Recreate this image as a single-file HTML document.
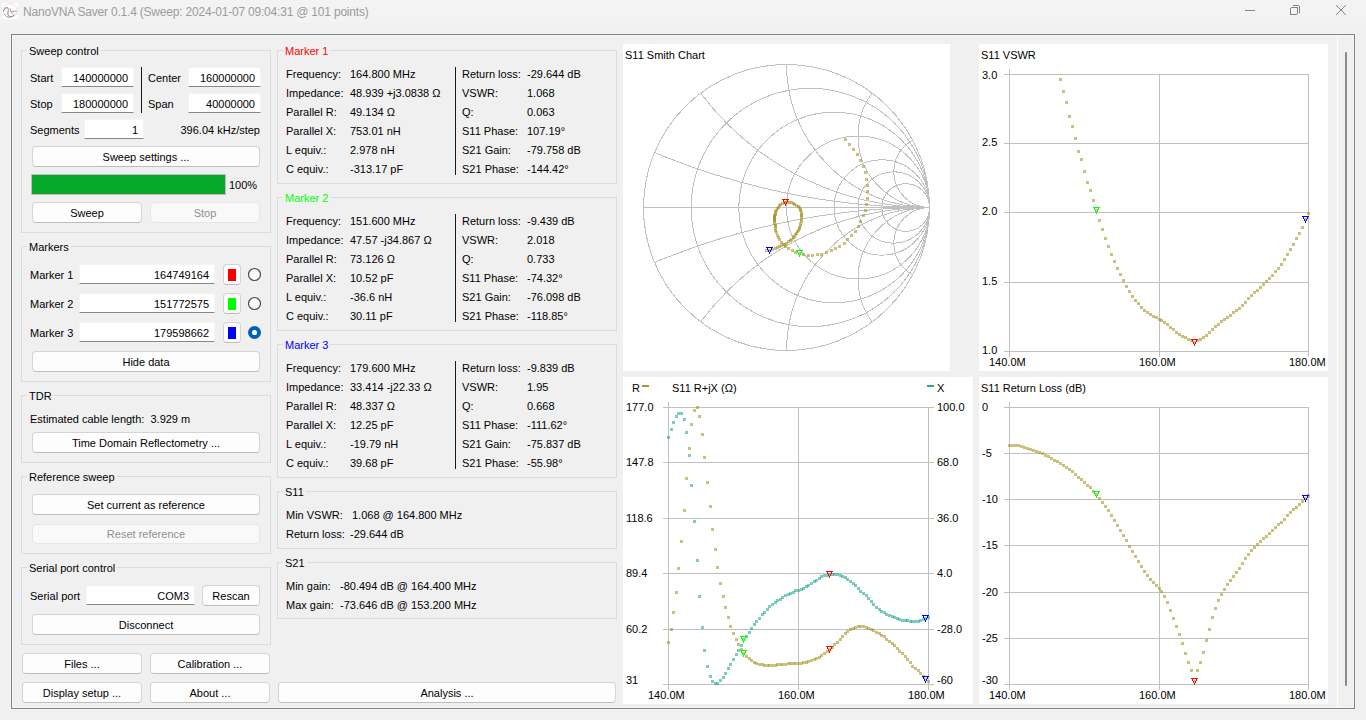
<!DOCTYPE html><html><head><meta charset="utf-8"><style>
*{margin:0;padding:0}
html,body{width:1366px;height:720px;overflow:hidden;background:#f0f0f0;font-family:"Liberation Sans",sans-serif;font-size:11px;color:#000}
.t{position:absolute;white-space:pre;line-height:13px}
.btn{position:absolute;box-sizing:border-box;border-radius:4px}
.btn span{position:absolute;left:0;right:0;text-align:center;white-space:pre;line-height:13px}
.le{position:absolute;box-sizing:border-box;background:#fff;border:1px solid #f4f4f4;border-bottom:1px solid #868686;border-radius:2px 2px 0 0}
.le span{position:absolute;white-space:pre;line-height:13px}
svg{position:absolute}
</style></head><body><div style="position:absolute;left:0px;top:0px;width:1366px;height:30px;background:#f3f3f3;"></div>
<svg style="left:2px;top:3px" width="16" height="16" viewBox="0 0 16 16"><rect width="16" height="16" fill="#ffffff"/><circle cx="8.3" cy="7.6" r="6.8" fill="none" stroke="#c4c4c8" stroke-width="0.9" stroke-dasharray="1.2 0.8"/><path d="M1.3 8.5 Q2.5 4 5.5 4.5 Q7 6 6 9 Q5 12 7.5 13.5 Q10.5 14 12.5 12" fill="none" stroke="#8a82b0" stroke-width="1"/><path d="M2 11 Q4 14.5 8 14.5" fill="none" stroke="#9a94b8" stroke-width="0.9"/><path d="M8.2 5 L8.6 8 L10.8 11.5" fill="none" stroke="#e8906a" stroke-width="0.9"/><path d="M9 8.5 L14.8 8.2" stroke="#8c8c98" stroke-width="0.8"/></svg>
<div class="t" style="top:6px;left:23px;color:#9b9b9b;font-size:12px;letter-spacing:-0.2px;">NanoVNA Saver 0.1.4 (Sweep: 2024-01-07 09:04:31 @ 101 points)</div>
<svg style="left:1230px;top:0px" width="136" height="22"><g stroke="#858585" stroke-width="1" fill="none" shape-rendering="crispEdges"><line x1="15" y1="10.5" x2="25" y2="10.5"/><rect x="60.5" y="7.5" width="7" height="7" rx="1.5"/><path d="M62.5 5.5 h5 a2 2 0 0 1 2 2 v5"/></g><g stroke="#858585" stroke-width="1" fill="none"><path d="M106 5 L116 15 M116 5 L106 15"/></g></svg>
<div style="position:absolute;left:0px;top:23px;width:1366px;height:697px;background:#f0f0f0;"></div>
<div style="position:absolute;left:11px;top:34px;width:1344px;height:675px;box-sizing:border-box;border:1px solid #7d818a;"></div>
<div style="position:absolute;left:10px;top:33px;width:1346px;height:677px;box-sizing:border-box;border:1px solid #f6f6f6;"></div>
<div style="position:absolute;left:12px;top:35px;width:1342px;height:673px;box-sizing:border-box;border:1px solid #f7f7f7;"></div>
<div style="position:absolute;left:21px;top:50px;width:250px;height:183px;box-sizing:border-box;border:1px solid #dcdcdc;"></div>
<div class="t" style="top:45px;left:29px;background:#f0f0f0;padding:0 2px;margin-left:-2px;">Sweep control</div>
<div class="t" style="top:72px;left:30px;">Start</div>
<div class="le" style="left:61px;top:67px;width:73px;height:20px;"><span style="right:5px;top:4px">140000000</span></div>
<div class="t" style="top:98px;left:30px;">Stop</div>
<div class="le" style="left:61px;top:93px;width:73px;height:20px;"><span style="right:5px;top:4px">180000000</span></div>
<div style="position:absolute;left:141px;top:67px;width:1px;height:46px;background:#1a1a1a;"></div>
<div class="t" style="top:72px;left:148px;">Center</div>
<div class="le" style="left:188px;top:67px;width:73px;height:20px;"><span style="right:5px;top:4px">160000000</span></div>
<div class="t" style="top:98px;left:148px;">Span</div>
<div class="le" style="left:188px;top:93px;width:73px;height:20px;"><span style="right:5px;top:4px">40000000</span></div>
<div class="t" style="top:124px;left:30px;">Segments</div>
<div class="le" style="left:84px;top:119px;width:60px;height:20px;"><span style="right:5px;top:4px">1</span></div>
<div class="t" style="top:124px;right:1106px;">396.04 kHz/step</div>
<div class="btn" style="left:32px;top:146px;width:228px;height:21px;background:#fdfdfd;border:1px solid #d4d4d4;border-bottom-color:#bdbdbd;color:#000;"><span style="top:4px">Sweep settings ...</span></div>
<div style="position:absolute;left:32px;top:175px;width:193px;height:19px;background:#06a829;box-shadow:0 0 0 1px #c4bcc4;"></div>
<div class="t" style="top:179px;left:229px;">100%</div>
<div class="btn" style="left:32px;top:202px;width:110px;height:21px;background:#fdfdfd;border:1px solid #d4d4d4;border-bottom-color:#bdbdbd;color:#000;"><span style="top:4px">Sweep</span></div>
<div class="btn" style="left:150px;top:202px;width:110px;height:21px;background:#f9f9f9;border:1px solid #e6e6e6;color:#8f8f8f;"><span style="top:4px">Stop</span></div>
<div style="position:absolute;left:21px;top:246px;width:250px;height:136px;box-sizing:border-box;border:1px solid #dcdcdc;"></div>
<div class="t" style="top:241px;left:29px;background:#f0f0f0;padding:0 2px;margin-left:-2px;">Markers</div>
<div class="t" style="top:269px;left:30px;">Marker 1</div>
<div class="le" style="left:79px;top:264px;width:136px;height:20px;"><span style="right:5px;top:4px">164749164</span></div>
<div style="position:absolute;left:223px;top:264px;width:18px;height:21px;box-sizing:border-box;background:#fdfdfd;border:1px solid #d4d4d4;border-bottom-color:#bdbdbd;border-radius:4px;"></div>
<div style="position:absolute;left:228px;top:269px;width:8px;height:12px;background:#ff0000;"></div>
<svg style="left:247px;top:267px" width="15" height="15"><circle cx="7.5" cy="7.5" r="6" fill="#f8f8f8" stroke="#4a4a4a" stroke-width="1.2"/></svg>
<div class="t" style="top:298px;left:30px;">Marker 2</div>
<div class="le" style="left:79px;top:293px;width:136px;height:20px;"><span style="right:5px;top:4px">151772575</span></div>
<div style="position:absolute;left:223px;top:293px;width:18px;height:21px;box-sizing:border-box;background:#fdfdfd;border:1px solid #d4d4d4;border-bottom-color:#bdbdbd;border-radius:4px;"></div>
<div style="position:absolute;left:228px;top:298px;width:8px;height:12px;background:#00ff00;"></div>
<svg style="left:247px;top:296px" width="15" height="15"><circle cx="7.5" cy="7.5" r="6" fill="#f8f8f8" stroke="#4a4a4a" stroke-width="1.2"/></svg>
<div class="t" style="top:327px;left:30px;">Marker 3</div>
<div class="le" style="left:79px;top:322px;width:136px;height:20px;"><span style="right:5px;top:4px">179598662</span></div>
<div style="position:absolute;left:223px;top:322px;width:18px;height:21px;box-sizing:border-box;background:#fdfdfd;border:1px solid #d4d4d4;border-bottom-color:#bdbdbd;border-radius:4px;"></div>
<div style="position:absolute;left:228px;top:327px;width:8px;height:12px;background:#0000ff;"></div>
<svg style="left:247px;top:325px" width="15" height="15"><circle cx="7.5" cy="7.5" r="6.5" fill="#005fb8"/><circle cx="7.5" cy="7.5" r="2.6" fill="#fff"/></svg>
<div class="btn" style="left:32px;top:351px;width:228px;height:21px;background:#fdfdfd;border:1px solid #d4d4d4;border-bottom-color:#bdbdbd;color:#000;"><span style="top:4px">Hide data</span></div>
<div style="position:absolute;left:21px;top:395px;width:250px;height:68px;box-sizing:border-box;border:1px solid #dcdcdc;"></div>
<div class="t" style="top:390px;left:29px;background:#f0f0f0;padding:0 2px;margin-left:-2px;">TDR</div>
<div class="t" style="top:413px;left:30px;">Estimated cable length:  3.929 m</div>
<div class="btn" style="left:32px;top:432px;width:228px;height:21px;background:#fdfdfd;border:1px solid #d4d4d4;border-bottom-color:#bdbdbd;color:#000;"><span style="top:4px">Time Domain Reflectometry ...</span></div>
<div style="position:absolute;left:21px;top:476px;width:250px;height:78px;box-sizing:border-box;border:1px solid #dcdcdc;"></div>
<div class="t" style="top:471px;left:29px;background:#f0f0f0;padding:0 2px;margin-left:-2px;">Reference sweep</div>
<div class="btn" style="left:32px;top:494px;width:228px;height:21px;background:#fdfdfd;border:1px solid #d4d4d4;border-bottom-color:#bdbdbd;color:#000;"><span style="top:4px">Set current as reference</span></div>
<div class="btn" style="left:32px;top:524px;width:228px;height:20px;background:#f9f9f9;border:1px solid #e6e6e6;color:#8f8f8f;"><span style="top:3px">Reset reference</span></div>
<div style="position:absolute;left:21px;top:567px;width:250px;height:78px;box-sizing:border-box;border:1px solid #dcdcdc;"></div>
<div class="t" style="top:562px;left:29px;background:#f0f0f0;padding:0 2px;margin-left:-2px;">Serial port control</div>
<div class="t" style="top:590px;left:30px;">Serial port</div>
<div class="le" style="left:86px;top:585px;width:109px;height:20px;"><span style="right:5px;top:4px">COM3</span></div>
<div class="btn" style="left:202px;top:585px;width:58px;height:21px;background:#fdfdfd;border:1px solid #d4d4d4;border-bottom-color:#bdbdbd;color:#000;"><span style="top:4px">Rescan</span></div>
<div class="btn" style="left:32px;top:614px;width:228px;height:21px;background:#fdfdfd;border:1px solid #d4d4d4;border-bottom-color:#bdbdbd;color:#000;"><span style="top:4px">Disconnect</span></div>
<div class="btn" style="left:22px;top:653px;width:120px;height:21px;background:#fdfdfd;border:1px solid #d4d4d4;border-bottom-color:#bdbdbd;color:#000;"><span style="top:4px">Files ...</span></div>
<div class="btn" style="left:150px;top:653px;width:120px;height:21px;background:#fdfdfd;border:1px solid #d4d4d4;border-bottom-color:#bdbdbd;color:#000;"><span style="top:4px">Calibration ...</span></div>
<div class="btn" style="left:22px;top:682px;width:120px;height:21px;background:#fdfdfd;border:1px solid #d4d4d4;border-bottom-color:#bdbdbd;color:#000;"><span style="top:4px">Display setup ...</span></div>
<div class="btn" style="left:150px;top:682px;width:120px;height:21px;background:#fdfdfd;border:1px solid #d4d4d4;border-bottom-color:#bdbdbd;color:#000;"><span style="top:4px">About ...</span></div>
<div style="position:absolute;left:277px;top:50px;width:340px;height:134px;box-sizing:border-box;border:1px solid #dcdcdc;"></div>
<div class="t" style="top:45px;left:285px;color:#ff0000;background:#f0f0f0;padding:0 2px;margin-left:-2px;">Marker 1</div>
<div style="position:absolute;left:455px;top:67px;width:1px;height:108px;background:#1a1a1a;"></div>
<div class="t" style="top:68px;left:286px;">Frequency:</div>
<div class="t" style="top:68px;left:350px;">164.800 MHz</div>
<div class="t" style="top:68px;left:462px;">Return loss:</div>
<div class="t" style="top:68px;left:527px;">-29.644 dB</div>
<div class="t" style="top:87px;left:286px;">Impedance:</div>
<div class="t" style="top:87px;left:350px;">48.939 +j3.0838 Ω</div>
<div class="t" style="top:87px;left:462px;">VSWR:</div>
<div class="t" style="top:87px;left:527px;">1.068</div>
<div class="t" style="top:106px;left:286px;">Parallel R:</div>
<div class="t" style="top:106px;left:350px;">49.134 Ω</div>
<div class="t" style="top:106px;left:462px;">Q:</div>
<div class="t" style="top:106px;left:527px;">0.063</div>
<div class="t" style="top:125px;left:286px;">Parallel X:</div>
<div class="t" style="top:125px;left:350px;">753.01 nH</div>
<div class="t" style="top:125px;left:462px;">S11 Phase:</div>
<div class="t" style="top:125px;left:527px;">107.19°</div>
<div class="t" style="top:144px;left:286px;">L equiv.:</div>
<div class="t" style="top:144px;left:350px;">2.978 nH</div>
<div class="t" style="top:144px;left:462px;">S21 Gain:</div>
<div class="t" style="top:144px;left:527px;">-79.758 dB</div>
<div class="t" style="top:163px;left:286px;">C equiv.:</div>
<div class="t" style="top:163px;left:350px;">-313.17 pF</div>
<div class="t" style="top:163px;left:462px;">S21 Phase:</div>
<div class="t" style="top:163px;left:527px;">-144.42°</div>
<div style="position:absolute;left:277px;top:197px;width:340px;height:134px;box-sizing:border-box;border:1px solid #dcdcdc;"></div>
<div class="t" style="top:192px;left:285px;color:#00ff00;background:#f0f0f0;padding:0 2px;margin-left:-2px;">Marker 2</div>
<div style="position:absolute;left:455px;top:214px;width:1px;height:108px;background:#1a1a1a;"></div>
<div class="t" style="top:215px;left:286px;">Frequency:</div>
<div class="t" style="top:215px;left:350px;">151.600 MHz</div>
<div class="t" style="top:215px;left:462px;">Return loss:</div>
<div class="t" style="top:215px;left:527px;">-9.439 dB</div>
<div class="t" style="top:234px;left:286px;">Impedance:</div>
<div class="t" style="top:234px;left:350px;">47.57 -j34.867 Ω</div>
<div class="t" style="top:234px;left:462px;">VSWR:</div>
<div class="t" style="top:234px;left:527px;">2.018</div>
<div class="t" style="top:253px;left:286px;">Parallel R:</div>
<div class="t" style="top:253px;left:350px;">73.126 Ω</div>
<div class="t" style="top:253px;left:462px;">Q:</div>
<div class="t" style="top:253px;left:527px;">0.733</div>
<div class="t" style="top:272px;left:286px;">Parallel X:</div>
<div class="t" style="top:272px;left:350px;">10.52 pF</div>
<div class="t" style="top:272px;left:462px;">S11 Phase:</div>
<div class="t" style="top:272px;left:527px;">-74.32°</div>
<div class="t" style="top:291px;left:286px;">L equiv.:</div>
<div class="t" style="top:291px;left:350px;">-36.6 nH</div>
<div class="t" style="top:291px;left:462px;">S21 Gain:</div>
<div class="t" style="top:291px;left:527px;">-76.098 dB</div>
<div class="t" style="top:310px;left:286px;">C equiv.:</div>
<div class="t" style="top:310px;left:350px;">30.11 pF</div>
<div class="t" style="top:310px;left:462px;">S21 Phase:</div>
<div class="t" style="top:310px;left:527px;">-118.85°</div>
<div style="position:absolute;left:277px;top:344px;width:340px;height:134px;box-sizing:border-box;border:1px solid #dcdcdc;"></div>
<div class="t" style="top:339px;left:285px;color:#0000ff;background:#f0f0f0;padding:0 2px;margin-left:-2px;">Marker 3</div>
<div style="position:absolute;left:455px;top:361px;width:1px;height:108px;background:#1a1a1a;"></div>
<div class="t" style="top:362px;left:286px;">Frequency:</div>
<div class="t" style="top:362px;left:350px;">179.600 MHz</div>
<div class="t" style="top:362px;left:462px;">Return loss:</div>
<div class="t" style="top:362px;left:527px;">-9.839 dB</div>
<div class="t" style="top:381px;left:286px;">Impedance:</div>
<div class="t" style="top:381px;left:350px;">33.414 -j22.33 Ω</div>
<div class="t" style="top:381px;left:462px;">VSWR:</div>
<div class="t" style="top:381px;left:527px;">1.95</div>
<div class="t" style="top:400px;left:286px;">Parallel R:</div>
<div class="t" style="top:400px;left:350px;">48.337 Ω</div>
<div class="t" style="top:400px;left:462px;">Q:</div>
<div class="t" style="top:400px;left:527px;">0.668</div>
<div class="t" style="top:419px;left:286px;">Parallel X:</div>
<div class="t" style="top:419px;left:350px;">12.25 pF</div>
<div class="t" style="top:419px;left:462px;">S11 Phase:</div>
<div class="t" style="top:419px;left:527px;">-111.62°</div>
<div class="t" style="top:438px;left:286px;">L equiv.:</div>
<div class="t" style="top:438px;left:350px;">-19.79 nH</div>
<div class="t" style="top:438px;left:462px;">S21 Gain:</div>
<div class="t" style="top:438px;left:527px;">-75.837 dB</div>
<div class="t" style="top:457px;left:286px;">C equiv.:</div>
<div class="t" style="top:457px;left:350px;">39.68 pF</div>
<div class="t" style="top:457px;left:462px;">S21 Phase:</div>
<div class="t" style="top:457px;left:527px;">-55.98°</div>
<div style="position:absolute;left:277px;top:491px;width:340px;height:58px;box-sizing:border-box;border:1px solid #dcdcdc;"></div>
<div class="t" style="top:486px;left:285px;background:#f0f0f0;padding:0 2px;margin-left:-2px;">S11</div>
<div class="t" style="top:509px;left:286px;">Min VSWR:</div>
<div class="t" style="top:509px;left:352px;">1.068 @ 164.800 MHz</div>
<div class="t" style="top:528px;left:286px;">Return loss:</div>
<div class="t" style="top:528px;left:350px;">-29.644 dB</div>
<div style="position:absolute;left:277px;top:562px;width:340px;height:57px;box-sizing:border-box;border:1px solid #dcdcdc;"></div>
<div class="t" style="top:557px;left:285px;background:#f0f0f0;padding:0 2px;margin-left:-2px;">S21</div>
<div class="t" style="top:580px;left:286px;">Min gain:</div>
<div class="t" style="top:580px;left:340px;">-80.494 dB @ 164.400 MHz</div>
<div class="t" style="top:599px;left:286px;">Max gain:</div>
<div class="t" style="top:599px;left:340px;">-73.646 dB @ 153.200 MHz</div>
<div class="btn" style="left:278px;top:682px;width:338px;height:21px;background:#fdfdfd;border:1px solid #d4d4d4;border-bottom-color:#bdbdbd;color:#000;"><span style="top:4px">Analysis ...</span></div>
<svg style="left:0;top:0" width="1366" height="720" shape-rendering="crispEdges"><rect x="623" y="44" width="327" height="327" fill="#fff"/><rect x="979" y="44" width="349" height="327" fill="#fff"/><rect x="623" y="377" width="350" height="327" fill="#fff"/><rect x="979" y="377" width="349" height="327" fill="#fff"/><g fill="none" stroke="#c0c0c0" stroke-width="1"><circle cx="786.5" cy="207.5" r="143.0"/><line x1="643.5" y1="207.5" x2="929.5" y2="207.5"/><clipPath id="sc"><circle cx="786.5" cy="207.5" r="143.5"/></clipPath><g clip-path="url(#sc)"><circle cx="810.33" cy="207.5" r="119.17"/><circle cx="834.17" cy="207.5" r="95.33"/><circle cx="858.00" cy="207.5" r="71.50"/><circle cx="881.83" cy="207.5" r="47.67"/><circle cx="893.75" cy="207.5" r="35.75"/><circle cx="905.67" cy="207.5" r="23.83"/><circle cx="929.50" cy="-507.50" r="715.00"/><circle cx="929.50" cy="922.50" r="715.00"/><circle cx="929.50" cy="-78.50" r="286.00"/><circle cx="929.50" cy="493.50" r="286.00"/><circle cx="929.50" cy="64.50" r="143.00"/><circle cx="929.50" cy="350.50" r="143.00"/><circle cx="929.50" cy="136.00" r="71.50"/><circle cx="929.50" cy="279.00" r="71.50"/><circle cx="929.50" cy="171.75" r="35.75"/><circle cx="929.50" cy="243.25" r="35.75"/></g></g><rect x="844" y="138" width="3" height="3" fill="rgba(160,140,20,0.55)"/><rect x="848" y="143" width="3" height="3" fill="rgba(160,140,20,0.55)"/><rect x="852" y="148" width="3" height="3" fill="rgba(160,140,20,0.55)"/><rect x="856" y="153" width="3" height="3" fill="rgba(160,140,20,0.55)"/><rect x="859" y="159" width="3" height="3" fill="rgba(160,140,20,0.55)"/><rect x="862" y="165" width="3" height="3" fill="rgba(160,140,20,0.55)"/><rect x="864" y="171" width="3" height="3" fill="rgba(160,140,20,0.55)"/><rect x="865" y="178" width="3" height="3" fill="rgba(160,140,20,0.55)"/><rect x="866" y="184" width="3" height="3" fill="rgba(160,140,20,0.55)"/><rect x="866" y="190" width="3" height="3" fill="rgba(160,140,20,0.55)"/><rect x="866" y="197" width="3" height="3" fill="rgba(160,140,20,0.55)"/><rect x="865" y="203" width="3" height="3" fill="rgba(160,140,20,0.55)"/><rect x="864" y="209" width="3" height="3" fill="rgba(160,140,20,0.55)"/><rect x="862" y="214" width="3" height="3" fill="rgba(160,140,20,0.55)"/><rect x="859" y="220" width="3" height="3" fill="rgba(160,140,20,0.55)"/><rect x="857" y="225" width="3" height="3" fill="rgba(160,140,20,0.55)"/><rect x="854" y="230" width="3" height="3" fill="rgba(160,140,20,0.55)"/><rect x="850" y="234" width="3" height="3" fill="rgba(160,140,20,0.55)"/><rect x="846" y="238" width="3" height="3" fill="rgba(160,140,20,0.55)"/><rect x="843" y="242" width="3" height="3" fill="rgba(160,140,20,0.55)"/><rect x="838" y="245" width="3" height="3" fill="rgba(160,140,20,0.55)"/><rect x="834" y="247" width="3" height="3" fill="rgba(160,140,20,0.55)"/><rect x="830" y="249" width="3" height="3" fill="rgba(160,140,20,0.55)"/><rect x="825" y="251" width="3" height="3" fill="rgba(160,140,20,0.55)"/><rect x="820" y="253" width="3" height="3" fill="rgba(160,140,20,0.55)"/><rect x="816" y="253" width="3" height="3" fill="rgba(160,140,20,0.55)"/><rect x="811" y="254" width="3" height="3" fill="rgba(160,140,20,0.55)"/><rect x="807" y="254" width="3" height="3" fill="rgba(160,140,20,0.55)"/><rect x="802" y="253" width="3" height="3" fill="rgba(160,140,20,0.55)"/><rect x="798" y="252" width="3" height="3" fill="rgba(160,140,20,0.55)"/><rect x="794" y="251" width="3" height="3" fill="rgba(160,140,20,0.55)"/><rect x="791" y="249" width="3" height="3" fill="rgba(160,140,20,0.55)"/><rect x="787" y="247" width="3" height="3" fill="rgba(160,140,20,0.55)"/><rect x="784" y="245" width="3" height="3" fill="rgba(160,140,20,0.55)"/><rect x="782" y="243" width="3" height="3" fill="rgba(160,140,20,0.55)"/><rect x="780" y="241" width="3" height="3" fill="rgba(160,140,20,0.55)"/><rect x="778" y="238" width="3" height="3" fill="rgba(160,140,20,0.55)"/><rect x="777" y="236" width="3" height="3" fill="rgba(160,140,20,0.55)"/><rect x="776" y="234" width="3" height="3" fill="rgba(160,140,20,0.55)"/><rect x="775" y="231" width="3" height="3" fill="rgba(160,140,20,0.55)"/><rect x="774" y="229" width="3" height="3" fill="rgba(160,140,20,0.55)"/><rect x="774" y="227" width="3" height="3" fill="rgba(160,140,20,0.55)"/><rect x="774" y="225" width="3" height="3" fill="rgba(160,140,20,0.55)"/><rect x="774" y="224" width="3" height="3" fill="rgba(160,140,20,0.55)"/><rect x="773" y="222" width="3" height="3" fill="rgba(160,140,20,0.55)"/><rect x="773" y="220" width="3" height="3" fill="rgba(160,140,20,0.55)"/><rect x="773" y="219" width="3" height="3" fill="rgba(160,140,20,0.55)"/><rect x="773" y="218" width="3" height="3" fill="rgba(160,140,20,0.55)"/><rect x="773" y="217" width="3" height="3" fill="rgba(160,140,20,0.55)"/><rect x="773" y="216" width="3" height="3" fill="rgba(160,140,20,0.55)"/><rect x="773" y="215" width="3" height="3" fill="rgba(160,140,20,0.55)"/><rect x="773" y="214" width="3" height="3" fill="rgba(160,140,20,0.55)"/><rect x="774" y="213" width="3" height="3" fill="rgba(160,140,20,0.55)"/><rect x="774" y="212" width="3" height="3" fill="rgba(160,140,20,0.55)"/><rect x="774" y="210" width="3" height="3" fill="rgba(160,140,20,0.55)"/><rect x="775" y="209" width="3" height="3" fill="rgba(160,140,20,0.55)"/><rect x="776" y="207" width="3" height="3" fill="rgba(160,140,20,0.55)"/><rect x="777" y="206" width="3" height="3" fill="rgba(160,140,20,0.55)"/><rect x="778" y="204" width="3" height="3" fill="rgba(160,140,20,0.55)"/><rect x="779" y="203" width="3" height="3" fill="rgba(160,140,20,0.55)"/><rect x="781" y="202" width="3" height="3" fill="rgba(160,140,20,0.55)"/><rect x="783" y="201" width="3" height="3" fill="rgba(160,140,20,0.55)"/><rect x="784" y="201" width="3" height="3" fill="rgba(160,140,20,0.55)"/><rect x="786" y="201" width="3" height="3" fill="rgba(160,140,20,0.55)"/><rect x="788" y="201" width="3" height="3" fill="rgba(160,140,20,0.55)"/><rect x="790" y="201" width="3" height="3" fill="rgba(160,140,20,0.55)"/><rect x="792" y="202" width="3" height="3" fill="rgba(160,140,20,0.55)"/><rect x="793" y="203" width="3" height="3" fill="rgba(160,140,20,0.55)"/><rect x="795" y="204" width="3" height="3" fill="rgba(160,140,20,0.55)"/><rect x="797" y="205" width="3" height="3" fill="rgba(160,140,20,0.55)"/><rect x="798" y="206" width="3" height="3" fill="rgba(160,140,20,0.55)"/><rect x="799" y="208" width="3" height="3" fill="rgba(160,140,20,0.55)"/><rect x="799" y="209" width="3" height="3" fill="rgba(160,140,20,0.55)"/><rect x="800" y="211" width="3" height="3" fill="rgba(160,140,20,0.55)"/><rect x="800" y="213" width="3" height="3" fill="rgba(160,140,20,0.55)"/><rect x="800" y="214" width="3" height="3" fill="rgba(160,140,20,0.55)"/><rect x="800" y="216" width="3" height="3" fill="rgba(160,140,20,0.55)"/><rect x="800" y="218" width="3" height="3" fill="rgba(160,140,20,0.55)"/><rect x="800" y="220" width="3" height="3" fill="rgba(160,140,20,0.55)"/><rect x="799" y="222" width="3" height="3" fill="rgba(160,140,20,0.55)"/><rect x="799" y="224" width="3" height="3" fill="rgba(160,140,20,0.55)"/><rect x="798" y="226" width="3" height="3" fill="rgba(160,140,20,0.55)"/><rect x="798" y="227" width="3" height="3" fill="rgba(160,140,20,0.55)"/><rect x="797" y="229" width="3" height="3" fill="rgba(160,140,20,0.55)"/><rect x="796" y="230" width="3" height="3" fill="rgba(160,140,20,0.55)"/><rect x="795" y="232" width="3" height="3" fill="rgba(160,140,20,0.55)"/><rect x="794" y="233" width="3" height="3" fill="rgba(160,140,20,0.55)"/><rect x="793" y="235" width="3" height="3" fill="rgba(160,140,20,0.55)"/><rect x="792" y="236" width="3" height="3" fill="rgba(160,140,20,0.55)"/><rect x="790" y="238" width="3" height="3" fill="rgba(160,140,20,0.55)"/><rect x="789" y="239" width="3" height="3" fill="rgba(160,140,20,0.55)"/><rect x="787" y="240" width="3" height="3" fill="rgba(160,140,20,0.55)"/><rect x="785" y="242" width="3" height="3" fill="rgba(160,140,20,0.55)"/><rect x="783" y="243" width="3" height="3" fill="rgba(160,140,20,0.55)"/><rect x="780" y="244" width="3" height="3" fill="rgba(160,140,20,0.55)"/><rect x="778" y="245" width="3" height="3" fill="rgba(160,140,20,0.55)"/><rect x="776" y="246" width="3" height="3" fill="rgba(160,140,20,0.55)"/><rect x="774" y="247" width="3" height="3" fill="rgba(160,140,20,0.55)"/><rect x="771" y="248" width="3" height="3" fill="rgba(160,140,20,0.55)"/><rect x="768" y="249" width="3" height="3" fill="rgba(160,140,20,0.55)"/><rect x="765" y="249" width="3" height="3" fill="rgba(160,140,20,0.55)"/><rect x="782" y="199" width="7" height="1" fill="#ff0000"/><rect x="783" y="200" width="1" height="1" fill="#ff0000"/><rect x="787" y="200" width="1" height="1" fill="#ff0000"/><rect x="783" y="201" width="1" height="1" fill="#ff0000"/><rect x="787" y="201" width="1" height="1" fill="#ff0000"/><rect x="784" y="202" width="1" height="1" fill="#ff0000"/><rect x="786" y="202" width="1" height="1" fill="#ff0000"/><rect x="784" y="203" width="1" height="1" fill="#ff0000"/><rect x="786" y="203" width="1" height="1" fill="#ff0000"/><rect x="785" y="204" width="1" height="1" fill="#ff0000"/><rect x="785" y="205" width="1" height="1" fill="#ff0000"/><rect x="796" y="250" width="7" height="1" fill="#00ff00"/><rect x="797" y="251" width="1" height="1" fill="#00ff00"/><rect x="801" y="251" width="1" height="1" fill="#00ff00"/><rect x="797" y="252" width="1" height="1" fill="#00ff00"/><rect x="801" y="252" width="1" height="1" fill="#00ff00"/><rect x="798" y="253" width="1" height="1" fill="#00ff00"/><rect x="800" y="253" width="1" height="1" fill="#00ff00"/><rect x="798" y="254" width="1" height="1" fill="#00ff00"/><rect x="800" y="254" width="1" height="1" fill="#00ff00"/><rect x="799" y="255" width="1" height="1" fill="#00ff00"/><rect x="799" y="256" width="1" height="1" fill="#00ff00"/><rect x="766" y="247" width="7" height="1" fill="#0000ff"/><rect x="767" y="248" width="1" height="1" fill="#0000ff"/><rect x="771" y="248" width="1" height="1" fill="#0000ff"/><rect x="767" y="249" width="1" height="1" fill="#0000ff"/><rect x="771" y="249" width="1" height="1" fill="#0000ff"/><rect x="768" y="250" width="1" height="1" fill="#0000ff"/><rect x="770" y="250" width="1" height="1" fill="#0000ff"/><rect x="768" y="251" width="1" height="1" fill="#0000ff"/><rect x="770" y="251" width="1" height="1" fill="#0000ff"/><rect x="769" y="252" width="1" height="1" fill="#0000ff"/><rect x="769" y="253" width="1" height="1" fill="#0000ff"/><rect x="1009" y="69" width="1" height="288" fill="#c0c0c0"/><rect x="1004" y="74" width="305" height="1" fill="#c0c0c0"/><rect x="1004" y="143" width="305" height="1" fill="#c0c0c0"/><rect x="1004" y="212" width="305" height="1" fill="#c0c0c0"/><rect x="1004" y="282" width="305" height="1" fill="#c0c0c0"/><rect x="1004" y="351" width="305" height="1" fill="#c0c0c0"/><rect x="1159" y="74" width="1" height="283" fill="#c0c0c0"/><rect x="1308" y="74" width="1" height="283" fill="#c0c0c0"/><rect x="1059" y="78" width="3" height="3" fill="rgba(160,140,20,0.55)"/><rect x="1062" y="90" width="3" height="3" fill="rgba(160,140,20,0.55)"/><rect x="1065" y="101" width="3" height="3" fill="rgba(160,140,20,0.55)"/><rect x="1068" y="115" width="3" height="3" fill="rgba(160,140,20,0.55)"/><rect x="1071" y="125" width="3" height="3" fill="rgba(160,140,20,0.55)"/><rect x="1074" y="137" width="3" height="3" fill="rgba(160,140,20,0.55)"/><rect x="1077" y="150" width="3" height="3" fill="rgba(160,140,20,0.55)"/><rect x="1080" y="158" width="3" height="3" fill="rgba(160,140,20,0.55)"/><rect x="1083" y="170" width="3" height="3" fill="rgba(160,140,20,0.55)"/><rect x="1086" y="181" width="3" height="3" fill="rgba(160,140,20,0.55)"/><rect x="1089" y="189" width="3" height="3" fill="rgba(160,140,20,0.55)"/><rect x="1092" y="199" width="3" height="3" fill="rgba(160,140,20,0.55)"/><rect x="1095" y="209" width="3" height="3" fill="rgba(160,140,20,0.55)"/><rect x="1098" y="219" width="3" height="3" fill="rgba(160,140,20,0.55)"/><rect x="1101" y="228" width="3" height="3" fill="rgba(160,140,20,0.55)"/><rect x="1104" y="237" width="3" height="3" fill="rgba(160,140,20,0.55)"/><rect x="1107" y="245" width="3" height="3" fill="rgba(160,140,20,0.55)"/><rect x="1110" y="253" width="3" height="3" fill="rgba(160,140,20,0.55)"/><rect x="1113" y="260" width="3" height="3" fill="rgba(160,140,20,0.55)"/><rect x="1116" y="267" width="3" height="3" fill="rgba(160,140,20,0.55)"/><rect x="1119" y="273" width="3" height="3" fill="rgba(160,140,20,0.55)"/><rect x="1122" y="279" width="3" height="3" fill="rgba(160,140,20,0.55)"/><rect x="1125" y="285" width="3" height="3" fill="rgba(160,140,20,0.55)"/><rect x="1128" y="290" width="3" height="3" fill="rgba(160,140,20,0.55)"/><rect x="1131" y="295" width="3" height="3" fill="rgba(160,140,20,0.55)"/><rect x="1134" y="299" width="3" height="3" fill="rgba(160,140,20,0.55)"/><rect x="1137" y="302" width="3" height="3" fill="rgba(160,140,20,0.55)"/><rect x="1140" y="306" width="3" height="3" fill="rgba(160,140,20,0.55)"/><rect x="1143" y="309" width="3" height="3" fill="rgba(160,140,20,0.55)"/><rect x="1146" y="311" width="3" height="3" fill="rgba(160,140,20,0.55)"/><rect x="1149" y="313" width="3" height="3" fill="rgba(160,140,20,0.55)"/><rect x="1152" y="315" width="3" height="3" fill="rgba(160,140,20,0.55)"/><rect x="1155" y="316" width="3" height="3" fill="rgba(160,140,20,0.55)"/><rect x="1158" y="318" width="3" height="3" fill="rgba(160,140,20,0.55)"/><rect x="1160" y="319" width="3" height="3" fill="rgba(160,140,20,0.55)"/><rect x="1163" y="321" width="3" height="3" fill="rgba(160,140,20,0.55)"/><rect x="1166" y="323" width="3" height="3" fill="rgba(160,140,20,0.55)"/><rect x="1169" y="326" width="3" height="3" fill="rgba(160,140,20,0.55)"/><rect x="1172" y="328" width="3" height="3" fill="rgba(160,140,20,0.55)"/><rect x="1175" y="331" width="3" height="3" fill="rgba(160,140,20,0.55)"/><rect x="1178" y="333" width="3" height="3" fill="rgba(160,140,20,0.55)"/><rect x="1181" y="335" width="3" height="3" fill="rgba(160,140,20,0.55)"/><rect x="1184" y="336" width="3" height="3" fill="rgba(160,140,20,0.55)"/><rect x="1187" y="338" width="3" height="3" fill="rgba(160,140,20,0.55)"/><rect x="1190" y="339" width="3" height="3" fill="rgba(160,140,20,0.55)"/><rect x="1193" y="341" width="3" height="3" fill="rgba(160,140,20,0.55)"/><rect x="1196" y="339" width="3" height="3" fill="rgba(160,140,20,0.55)"/><rect x="1199" y="338" width="3" height="3" fill="rgba(160,140,20,0.55)"/><rect x="1202" y="336" width="3" height="3" fill="rgba(160,140,20,0.55)"/><rect x="1205" y="334" width="3" height="3" fill="rgba(160,140,20,0.55)"/><rect x="1208" y="331" width="3" height="3" fill="rgba(160,140,20,0.55)"/><rect x="1211" y="328" width="3" height="3" fill="rgba(160,140,20,0.55)"/><rect x="1214" y="325" width="3" height="3" fill="rgba(160,140,20,0.55)"/><rect x="1217" y="323" width="3" height="3" fill="rgba(160,140,20,0.55)"/><rect x="1220" y="320" width="3" height="3" fill="rgba(160,140,20,0.55)"/><rect x="1223" y="318" width="3" height="3" fill="rgba(160,140,20,0.55)"/><rect x="1226" y="316" width="3" height="3" fill="rgba(160,140,20,0.55)"/><rect x="1229" y="314" width="3" height="3" fill="rgba(160,140,20,0.55)"/><rect x="1232" y="311" width="3" height="3" fill="rgba(160,140,20,0.55)"/><rect x="1235" y="309" width="3" height="3" fill="rgba(160,140,20,0.55)"/><rect x="1238" y="307" width="3" height="3" fill="rgba(160,140,20,0.55)"/><rect x="1241" y="304" width="3" height="3" fill="rgba(160,140,20,0.55)"/><rect x="1244" y="301" width="3" height="3" fill="rgba(160,140,20,0.55)"/><rect x="1247" y="297" width="3" height="3" fill="rgba(160,140,20,0.55)"/><rect x="1250" y="294" width="3" height="3" fill="rgba(160,140,20,0.55)"/><rect x="1253" y="291" width="3" height="3" fill="rgba(160,140,20,0.55)"/><rect x="1256" y="289" width="3" height="3" fill="rgba(160,140,20,0.55)"/><rect x="1259" y="286" width="3" height="3" fill="rgba(160,140,20,0.55)"/><rect x="1262" y="283" width="3" height="3" fill="rgba(160,140,20,0.55)"/><rect x="1265" y="280" width="3" height="3" fill="rgba(160,140,20,0.55)"/><rect x="1268" y="277" width="3" height="3" fill="rgba(160,140,20,0.55)"/><rect x="1271" y="274" width="3" height="3" fill="rgba(160,140,20,0.55)"/><rect x="1274" y="270" width="3" height="3" fill="rgba(160,140,20,0.55)"/><rect x="1277" y="267" width="3" height="3" fill="rgba(160,140,20,0.55)"/><rect x="1280" y="263" width="3" height="3" fill="rgba(160,140,20,0.55)"/><rect x="1283" y="258" width="3" height="3" fill="rgba(160,140,20,0.55)"/><rect x="1286" y="253" width="3" height="3" fill="rgba(160,140,20,0.55)"/><rect x="1289" y="248" width="3" height="3" fill="rgba(160,140,20,0.55)"/><rect x="1292" y="243" width="3" height="3" fill="rgba(160,140,20,0.55)"/><rect x="1295" y="237" width="3" height="3" fill="rgba(160,140,20,0.55)"/><rect x="1298" y="232" width="3" height="3" fill="rgba(160,140,20,0.55)"/><rect x="1301" y="226" width="3" height="3" fill="rgba(160,140,20,0.55)"/><rect x="1304" y="218" width="3" height="3" fill="rgba(160,140,20,0.55)"/><rect x="1307" y="212" width="3" height="3" fill="rgba(160,140,20,0.55)"/><rect x="1191" y="339" width="7" height="1" fill="#ff0000"/><rect x="1192" y="340" width="1" height="1" fill="#ff0000"/><rect x="1196" y="340" width="1" height="1" fill="#ff0000"/><rect x="1192" y="341" width="1" height="1" fill="#ff0000"/><rect x="1196" y="341" width="1" height="1" fill="#ff0000"/><rect x="1193" y="342" width="1" height="1" fill="#ff0000"/><rect x="1195" y="342" width="1" height="1" fill="#ff0000"/><rect x="1193" y="343" width="1" height="1" fill="#ff0000"/><rect x="1195" y="343" width="1" height="1" fill="#ff0000"/><rect x="1194" y="344" width="1" height="1" fill="#ff0000"/><rect x="1194" y="345" width="1" height="1" fill="#ff0000"/><rect x="1093" y="207" width="7" height="1" fill="#00ff00"/><rect x="1094" y="208" width="1" height="1" fill="#00ff00"/><rect x="1098" y="208" width="1" height="1" fill="#00ff00"/><rect x="1094" y="209" width="1" height="1" fill="#00ff00"/><rect x="1098" y="209" width="1" height="1" fill="#00ff00"/><rect x="1095" y="210" width="1" height="1" fill="#00ff00"/><rect x="1097" y="210" width="1" height="1" fill="#00ff00"/><rect x="1095" y="211" width="1" height="1" fill="#00ff00"/><rect x="1097" y="211" width="1" height="1" fill="#00ff00"/><rect x="1096" y="212" width="1" height="1" fill="#00ff00"/><rect x="1096" y="213" width="1" height="1" fill="#00ff00"/><rect x="1302" y="216" width="7" height="1" fill="#0000ff"/><rect x="1303" y="217" width="1" height="1" fill="#0000ff"/><rect x="1307" y="217" width="1" height="1" fill="#0000ff"/><rect x="1303" y="218" width="1" height="1" fill="#0000ff"/><rect x="1307" y="218" width="1" height="1" fill="#0000ff"/><rect x="1304" y="219" width="1" height="1" fill="#0000ff"/><rect x="1306" y="219" width="1" height="1" fill="#0000ff"/><rect x="1304" y="220" width="1" height="1" fill="#0000ff"/><rect x="1306" y="220" width="1" height="1" fill="#0000ff"/><rect x="1305" y="221" width="1" height="1" fill="#0000ff"/><rect x="1305" y="222" width="1" height="1" fill="#0000ff"/><rect x="1009" y="402" width="1" height="288" fill="#c0c0c0"/><rect x="1004" y="407" width="305" height="1" fill="#c0c0c0"/><rect x="1004" y="453" width="305" height="1" fill="#c0c0c0"/><rect x="1004" y="499" width="305" height="1" fill="#c0c0c0"/><rect x="1004" y="545" width="305" height="1" fill="#c0c0c0"/><rect x="1004" y="592" width="305" height="1" fill="#c0c0c0"/><rect x="1004" y="638" width="305" height="1" fill="#c0c0c0"/><rect x="1004" y="684" width="305" height="1" fill="#c0c0c0"/><rect x="1159" y="407" width="1" height="283" fill="#c0c0c0"/><rect x="1308" y="407" width="1" height="283" fill="#c0c0c0"/><rect x="1008" y="444" width="3" height="3" fill="rgba(160,140,20,0.55)"/><rect x="1011" y="444" width="3" height="3" fill="rgba(160,140,20,0.55)"/><rect x="1014" y="444" width="3" height="3" fill="rgba(160,140,20,0.55)"/><rect x="1017" y="444" width="3" height="3" fill="rgba(160,140,20,0.55)"/><rect x="1020" y="445" width="3" height="3" fill="rgba(160,140,20,0.55)"/><rect x="1023" y="446" width="3" height="3" fill="rgba(160,140,20,0.55)"/><rect x="1026" y="447" width="3" height="3" fill="rgba(160,140,20,0.55)"/><rect x="1029" y="448" width="3" height="3" fill="rgba(160,140,20,0.55)"/><rect x="1032" y="449" width="3" height="3" fill="rgba(160,140,20,0.55)"/><rect x="1035" y="450" width="3" height="3" fill="rgba(160,140,20,0.55)"/><rect x="1038" y="451" width="3" height="3" fill="rgba(160,140,20,0.55)"/><rect x="1041" y="452" width="3" height="3" fill="rgba(160,140,20,0.55)"/><rect x="1044" y="454" width="3" height="3" fill="rgba(160,140,20,0.55)"/><rect x="1047" y="455" width="3" height="3" fill="rgba(160,140,20,0.55)"/><rect x="1050" y="457" width="3" height="3" fill="rgba(160,140,20,0.55)"/><rect x="1053" y="459" width="3" height="3" fill="rgba(160,140,20,0.55)"/><rect x="1056" y="460" width="3" height="3" fill="rgba(160,140,20,0.55)"/><rect x="1059" y="462" width="3" height="3" fill="rgba(160,140,20,0.55)"/><rect x="1062" y="464" width="3" height="3" fill="rgba(160,140,20,0.55)"/><rect x="1065" y="466" width="3" height="3" fill="rgba(160,140,20,0.55)"/><rect x="1068" y="468" width="3" height="3" fill="rgba(160,140,20,0.55)"/><rect x="1071" y="470" width="3" height="3" fill="rgba(160,140,20,0.55)"/><rect x="1074" y="473" width="3" height="3" fill="rgba(160,140,20,0.55)"/><rect x="1077" y="476" width="3" height="3" fill="rgba(160,140,20,0.55)"/><rect x="1080" y="478" width="3" height="3" fill="rgba(160,140,20,0.55)"/><rect x="1083" y="481" width="3" height="3" fill="rgba(160,140,20,0.55)"/><rect x="1086" y="484" width="3" height="3" fill="rgba(160,140,20,0.55)"/><rect x="1089" y="486" width="3" height="3" fill="rgba(160,140,20,0.55)"/><rect x="1092" y="490" width="3" height="3" fill="rgba(160,140,20,0.55)"/><rect x="1095" y="493" width="3" height="3" fill="rgba(160,140,20,0.55)"/><rect x="1098" y="497" width="3" height="3" fill="rgba(160,140,20,0.55)"/><rect x="1101" y="501" width="3" height="3" fill="rgba(160,140,20,0.55)"/><rect x="1104" y="505" width="3" height="3" fill="rgba(160,140,20,0.55)"/><rect x="1107" y="509" width="3" height="3" fill="rgba(160,140,20,0.55)"/><rect x="1110" y="514" width="3" height="3" fill="rgba(160,140,20,0.55)"/><rect x="1113" y="519" width="3" height="3" fill="rgba(160,140,20,0.55)"/><rect x="1116" y="524" width="3" height="3" fill="rgba(160,140,20,0.55)"/><rect x="1119" y="529" width="3" height="3" fill="rgba(160,140,20,0.55)"/><rect x="1122" y="534" width="3" height="3" fill="rgba(160,140,20,0.55)"/><rect x="1125" y="539" width="3" height="3" fill="rgba(160,140,20,0.55)"/><rect x="1128" y="545" width="3" height="3" fill="rgba(160,140,20,0.55)"/><rect x="1131" y="550" width="3" height="3" fill="rgba(160,140,20,0.55)"/><rect x="1134" y="555" width="3" height="3" fill="rgba(160,140,20,0.55)"/><rect x="1137" y="560" width="3" height="3" fill="rgba(160,140,20,0.55)"/><rect x="1140" y="565" width="3" height="3" fill="rgba(160,140,20,0.55)"/><rect x="1143" y="570" width="3" height="3" fill="rgba(160,140,20,0.55)"/><rect x="1146" y="574" width="3" height="3" fill="rgba(160,140,20,0.55)"/><rect x="1149" y="578" width="3" height="3" fill="rgba(160,140,20,0.55)"/><rect x="1152" y="581" width="3" height="3" fill="rgba(160,140,20,0.55)"/><rect x="1155" y="584" width="3" height="3" fill="rgba(160,140,20,0.55)"/><rect x="1158" y="587" width="3" height="3" fill="rgba(160,140,20,0.55)"/><rect x="1160" y="590" width="3" height="3" fill="rgba(160,140,20,0.55)"/><rect x="1163" y="595" width="3" height="3" fill="rgba(160,140,20,0.55)"/><rect x="1166" y="601" width="3" height="3" fill="rgba(160,140,20,0.55)"/><rect x="1169" y="609" width="3" height="3" fill="rgba(160,140,20,0.55)"/><rect x="1172" y="617" width="3" height="3" fill="rgba(160,140,20,0.55)"/><rect x="1175" y="625" width="3" height="3" fill="rgba(160,140,20,0.55)"/><rect x="1178" y="633" width="3" height="3" fill="rgba(160,140,20,0.55)"/><rect x="1181" y="642" width="3" height="3" fill="rgba(160,140,20,0.55)"/><rect x="1184" y="652" width="3" height="3" fill="rgba(160,140,20,0.55)"/><rect x="1187" y="661" width="3" height="3" fill="rgba(160,140,20,0.55)"/><rect x="1190" y="669" width="3" height="3" fill="rgba(160,140,20,0.55)"/><rect x="1193" y="680" width="3" height="3" fill="rgba(160,140,20,0.55)"/><rect x="1196" y="669" width="3" height="3" fill="rgba(160,140,20,0.55)"/><rect x="1199" y="661" width="3" height="3" fill="rgba(160,140,20,0.55)"/><rect x="1202" y="651" width="3" height="3" fill="rgba(160,140,20,0.55)"/><rect x="1205" y="639" width="3" height="3" fill="rgba(160,140,20,0.55)"/><rect x="1208" y="628" width="3" height="3" fill="rgba(160,140,20,0.55)"/><rect x="1211" y="616" width="3" height="3" fill="rgba(160,140,20,0.55)"/><rect x="1214" y="607" width="3" height="3" fill="rgba(160,140,20,0.55)"/><rect x="1217" y="599" width="3" height="3" fill="rgba(160,140,20,0.55)"/><rect x="1220" y="593" width="3" height="3" fill="rgba(160,140,20,0.55)"/><rect x="1223" y="588" width="3" height="3" fill="rgba(160,140,20,0.55)"/><rect x="1226" y="583" width="3" height="3" fill="rgba(160,140,20,0.55)"/><rect x="1229" y="579" width="3" height="3" fill="rgba(160,140,20,0.55)"/><rect x="1232" y="575" width="3" height="3" fill="rgba(160,140,20,0.55)"/><rect x="1235" y="571" width="3" height="3" fill="rgba(160,140,20,0.55)"/><rect x="1238" y="567" width="3" height="3" fill="rgba(160,140,20,0.55)"/><rect x="1241" y="562" width="3" height="3" fill="rgba(160,140,20,0.55)"/><rect x="1244" y="557" width="3" height="3" fill="rgba(160,140,20,0.55)"/><rect x="1247" y="553" width="3" height="3" fill="rgba(160,140,20,0.55)"/><rect x="1250" y="549" width="3" height="3" fill="rgba(160,140,20,0.55)"/><rect x="1253" y="546" width="3" height="3" fill="rgba(160,140,20,0.55)"/><rect x="1256" y="543" width="3" height="3" fill="rgba(160,140,20,0.55)"/><rect x="1259" y="540" width="3" height="3" fill="rgba(160,140,20,0.55)"/><rect x="1262" y="537" width="3" height="3" fill="rgba(160,140,20,0.55)"/><rect x="1265" y="535" width="3" height="3" fill="rgba(160,140,20,0.55)"/><rect x="1268" y="532" width="3" height="3" fill="rgba(160,140,20,0.55)"/><rect x="1271" y="529" width="3" height="3" fill="rgba(160,140,20,0.55)"/><rect x="1274" y="526" width="3" height="3" fill="rgba(160,140,20,0.55)"/><rect x="1277" y="523" width="3" height="3" fill="rgba(160,140,20,0.55)"/><rect x="1280" y="521" width="3" height="3" fill="rgba(160,140,20,0.55)"/><rect x="1283" y="518" width="3" height="3" fill="rgba(160,140,20,0.55)"/><rect x="1286" y="514" width="3" height="3" fill="rgba(160,140,20,0.55)"/><rect x="1289" y="511" width="3" height="3" fill="rgba(160,140,20,0.55)"/><rect x="1292" y="508" width="3" height="3" fill="rgba(160,140,20,0.55)"/><rect x="1295" y="506" width="3" height="3" fill="rgba(160,140,20,0.55)"/><rect x="1298" y="503" width="3" height="3" fill="rgba(160,140,20,0.55)"/><rect x="1301" y="500" width="3" height="3" fill="rgba(160,140,20,0.55)"/><rect x="1304" y="497" width="3" height="3" fill="rgba(160,140,20,0.55)"/><rect x="1307" y="494" width="3" height="3" fill="rgba(160,140,20,0.55)"/><rect x="1191" y="678" width="7" height="1" fill="#ff0000"/><rect x="1192" y="679" width="1" height="1" fill="#ff0000"/><rect x="1196" y="679" width="1" height="1" fill="#ff0000"/><rect x="1192" y="680" width="1" height="1" fill="#ff0000"/><rect x="1196" y="680" width="1" height="1" fill="#ff0000"/><rect x="1193" y="681" width="1" height="1" fill="#ff0000"/><rect x="1195" y="681" width="1" height="1" fill="#ff0000"/><rect x="1193" y="682" width="1" height="1" fill="#ff0000"/><rect x="1195" y="682" width="1" height="1" fill="#ff0000"/><rect x="1194" y="683" width="1" height="1" fill="#ff0000"/><rect x="1194" y="684" width="1" height="1" fill="#ff0000"/><rect x="1093" y="491" width="7" height="1" fill="#00ff00"/><rect x="1094" y="492" width="1" height="1" fill="#00ff00"/><rect x="1098" y="492" width="1" height="1" fill="#00ff00"/><rect x="1094" y="493" width="1" height="1" fill="#00ff00"/><rect x="1098" y="493" width="1" height="1" fill="#00ff00"/><rect x="1095" y="494" width="1" height="1" fill="#00ff00"/><rect x="1097" y="494" width="1" height="1" fill="#00ff00"/><rect x="1095" y="495" width="1" height="1" fill="#00ff00"/><rect x="1097" y="495" width="1" height="1" fill="#00ff00"/><rect x="1096" y="496" width="1" height="1" fill="#00ff00"/><rect x="1096" y="497" width="1" height="1" fill="#00ff00"/><rect x="1302" y="495" width="7" height="1" fill="#0000ff"/><rect x="1303" y="496" width="1" height="1" fill="#0000ff"/><rect x="1307" y="496" width="1" height="1" fill="#0000ff"/><rect x="1303" y="497" width="1" height="1" fill="#0000ff"/><rect x="1307" y="497" width="1" height="1" fill="#0000ff"/><rect x="1304" y="498" width="1" height="1" fill="#0000ff"/><rect x="1306" y="498" width="1" height="1" fill="#0000ff"/><rect x="1304" y="499" width="1" height="1" fill="#0000ff"/><rect x="1306" y="499" width="1" height="1" fill="#0000ff"/><rect x="1305" y="500" width="1" height="1" fill="#0000ff"/><rect x="1305" y="501" width="1" height="1" fill="#0000ff"/><rect x="668" y="402" width="1" height="288" fill="#c0c0c0"/><rect x="928" y="407" width="1" height="283" fill="#c0c0c0"/><rect x="663" y="407" width="271" height="1" fill="#c0c0c0"/><rect x="663" y="462" width="271" height="1" fill="#c0c0c0"/><rect x="663" y="518" width="271" height="1" fill="#c0c0c0"/><rect x="663" y="573" width="271" height="1" fill="#c0c0c0"/><rect x="663" y="629" width="271" height="1" fill="#c0c0c0"/><rect x="663" y="684" width="271" height="1" fill="#c0c0c0"/><rect x="798" y="407" width="1" height="283" fill="#c0c0c0"/><rect x="667" y="436" width="3" height="3" fill="rgba(20,160,140,0.55)"/><rect x="670" y="428" width="3" height="3" fill="rgba(20,160,140,0.55)"/><rect x="672" y="421" width="3" height="3" fill="rgba(20,160,140,0.55)"/><rect x="675" y="415" width="3" height="3" fill="rgba(20,160,140,0.55)"/><rect x="677" y="412" width="3" height="3" fill="rgba(20,160,140,0.55)"/><rect x="680" y="412" width="3" height="3" fill="rgba(20,160,140,0.55)"/><rect x="683" y="418" width="3" height="3" fill="rgba(20,160,140,0.55)"/><rect x="685" y="431" width="3" height="3" fill="rgba(20,160,140,0.55)"/><rect x="688" y="454" width="3" height="3" fill="rgba(20,160,140,0.55)"/><rect x="690" y="484" width="3" height="3" fill="rgba(20,160,140,0.55)"/><rect x="693" y="520" width="3" height="3" fill="rgba(20,160,140,0.55)"/><rect x="696" y="559" width="3" height="3" fill="rgba(20,160,140,0.55)"/><rect x="698" y="595" width="3" height="3" fill="rgba(20,160,140,0.55)"/><rect x="701" y="626" width="3" height="3" fill="rgba(20,160,140,0.55)"/><rect x="703" y="649" width="3" height="3" fill="rgba(20,160,140,0.55)"/><rect x="706" y="665" width="3" height="3" fill="rgba(20,160,140,0.55)"/><rect x="709" y="675" width="3" height="3" fill="rgba(20,160,140,0.55)"/><rect x="711" y="680" width="3" height="3" fill="rgba(20,160,140,0.55)"/><rect x="714" y="682" width="3" height="3" fill="rgba(20,160,140,0.55)"/><rect x="716" y="682" width="3" height="3" fill="rgba(20,160,140,0.55)"/><rect x="719" y="679" width="3" height="3" fill="rgba(20,160,140,0.55)"/><rect x="722" y="676" width="3" height="3" fill="rgba(20,160,140,0.55)"/><rect x="724" y="672" width="3" height="3" fill="rgba(20,160,140,0.55)"/><rect x="727" y="667" width="3" height="3" fill="rgba(20,160,140,0.55)"/><rect x="729" y="663" width="3" height="3" fill="rgba(20,160,140,0.55)"/><rect x="732" y="658" width="3" height="3" fill="rgba(20,160,140,0.55)"/><rect x="735" y="653" width="3" height="3" fill="rgba(20,160,140,0.55)"/><rect x="737" y="649" width="3" height="3" fill="rgba(20,160,140,0.55)"/><rect x="740" y="644" width="3" height="3" fill="rgba(20,160,140,0.55)"/><rect x="742" y="638" width="3" height="3" fill="rgba(20,160,140,0.55)"/><rect x="745" y="635" width="3" height="3" fill="rgba(20,160,140,0.55)"/><rect x="748" y="631" width="3" height="3" fill="rgba(20,160,140,0.55)"/><rect x="750" y="627" width="3" height="3" fill="rgba(20,160,140,0.55)"/><rect x="753" y="623" width="3" height="3" fill="rgba(20,160,140,0.55)"/><rect x="755" y="620" width="3" height="3" fill="rgba(20,160,140,0.55)"/><rect x="758" y="617" width="3" height="3" fill="rgba(20,160,140,0.55)"/><rect x="761" y="613" width="3" height="3" fill="rgba(20,160,140,0.55)"/><rect x="763" y="611" width="3" height="3" fill="rgba(20,160,140,0.55)"/><rect x="766" y="608" width="3" height="3" fill="rgba(20,160,140,0.55)"/><rect x="768" y="605" width="3" height="3" fill="rgba(20,160,140,0.55)"/><rect x="771" y="603" width="3" height="3" fill="rgba(20,160,140,0.55)"/><rect x="774" y="601" width="3" height="3" fill="rgba(20,160,140,0.55)"/><rect x="776" y="599" width="3" height="3" fill="rgba(20,160,140,0.55)"/><rect x="779" y="598" width="3" height="3" fill="rgba(20,160,140,0.55)"/><rect x="781" y="596" width="3" height="3" fill="rgba(20,160,140,0.55)"/><rect x="784" y="594" width="3" height="3" fill="rgba(20,160,140,0.55)"/><rect x="787" y="593" width="3" height="3" fill="rgba(20,160,140,0.55)"/><rect x="789" y="592" width="3" height="3" fill="rgba(20,160,140,0.55)"/><rect x="792" y="591" width="3" height="3" fill="rgba(20,160,140,0.55)"/><rect x="794" y="589" width="3" height="3" fill="rgba(20,160,140,0.55)"/><rect x="797" y="589" width="3" height="3" fill="rgba(20,160,140,0.55)"/><rect x="800" y="588" width="3" height="3" fill="rgba(20,160,140,0.55)"/><rect x="802" y="587" width="3" height="3" fill="rgba(20,160,140,0.55)"/><rect x="805" y="585" width="3" height="3" fill="rgba(20,160,140,0.55)"/><rect x="807" y="584" width="3" height="3" fill="rgba(20,160,140,0.55)"/><rect x="810" y="582" width="3" height="3" fill="rgba(20,160,140,0.55)"/><rect x="813" y="580" width="3" height="3" fill="rgba(20,160,140,0.55)"/><rect x="815" y="579" width="3" height="3" fill="rgba(20,160,140,0.55)"/><rect x="818" y="577" width="3" height="3" fill="rgba(20,160,140,0.55)"/><rect x="820" y="575" width="3" height="3" fill="rgba(20,160,140,0.55)"/><rect x="823" y="574" width="3" height="3" fill="rgba(20,160,140,0.55)"/><rect x="826" y="574" width="3" height="3" fill="rgba(20,160,140,0.55)"/><rect x="828" y="573" width="3" height="3" fill="rgba(20,160,140,0.55)"/><rect x="831" y="573" width="3" height="3" fill="rgba(20,160,140,0.55)"/><rect x="833" y="573" width="3" height="3" fill="rgba(20,160,140,0.55)"/><rect x="836" y="573" width="3" height="3" fill="rgba(20,160,140,0.55)"/><rect x="839" y="574" width="3" height="3" fill="rgba(20,160,140,0.55)"/><rect x="841" y="575" width="3" height="3" fill="rgba(20,160,140,0.55)"/><rect x="844" y="576" width="3" height="3" fill="rgba(20,160,140,0.55)"/><rect x="846" y="578" width="3" height="3" fill="rgba(20,160,140,0.55)"/><rect x="849" y="580" width="3" height="3" fill="rgba(20,160,140,0.55)"/><rect x="852" y="582" width="3" height="3" fill="rgba(20,160,140,0.55)"/><rect x="854" y="584" width="3" height="3" fill="rgba(20,160,140,0.55)"/><rect x="857" y="587" width="3" height="3" fill="rgba(20,160,140,0.55)"/><rect x="859" y="590" width="3" height="3" fill="rgba(20,160,140,0.55)"/><rect x="862" y="592" width="3" height="3" fill="rgba(20,160,140,0.55)"/><rect x="865" y="594" width="3" height="3" fill="rgba(20,160,140,0.55)"/><rect x="867" y="597" width="3" height="3" fill="rgba(20,160,140,0.55)"/><rect x="870" y="600" width="3" height="3" fill="rgba(20,160,140,0.55)"/><rect x="872" y="603" width="3" height="3" fill="rgba(20,160,140,0.55)"/><rect x="875" y="606" width="3" height="3" fill="rgba(20,160,140,0.55)"/><rect x="878" y="608" width="3" height="3" fill="rgba(20,160,140,0.55)"/><rect x="880" y="610" width="3" height="3" fill="rgba(20,160,140,0.55)"/><rect x="883" y="611" width="3" height="3" fill="rgba(20,160,140,0.55)"/><rect x="885" y="613" width="3" height="3" fill="rgba(20,160,140,0.55)"/><rect x="888" y="614" width="3" height="3" fill="rgba(20,160,140,0.55)"/><rect x="891" y="615" width="3" height="3" fill="rgba(20,160,140,0.55)"/><rect x="893" y="616" width="3" height="3" fill="rgba(20,160,140,0.55)"/><rect x="896" y="617" width="3" height="3" fill="rgba(20,160,140,0.55)"/><rect x="898" y="618" width="3" height="3" fill="rgba(20,160,140,0.55)"/><rect x="901" y="619" width="3" height="3" fill="rgba(20,160,140,0.55)"/><rect x="904" y="619" width="3" height="3" fill="rgba(20,160,140,0.55)"/><rect x="906" y="619" width="3" height="3" fill="rgba(20,160,140,0.55)"/><rect x="909" y="620" width="3" height="3" fill="rgba(20,160,140,0.55)"/><rect x="911" y="620" width="3" height="3" fill="rgba(20,160,140,0.55)"/><rect x="914" y="620" width="3" height="3" fill="rgba(20,160,140,0.55)"/><rect x="917" y="620" width="3" height="3" fill="rgba(20,160,140,0.55)"/><rect x="919" y="619" width="3" height="3" fill="rgba(20,160,140,0.55)"/><rect x="922" y="618" width="3" height="3" fill="rgba(20,160,140,0.55)"/><rect x="924" y="617" width="3" height="3" fill="rgba(20,160,140,0.55)"/><rect x="927" y="616" width="3" height="3" fill="rgba(20,160,140,0.55)"/><rect x="667" y="641" width="3" height="3" fill="rgba(160,140,20,0.55)"/><rect x="670" y="628" width="3" height="3" fill="rgba(160,140,20,0.55)"/><rect x="672" y="611" width="3" height="3" fill="rgba(160,140,20,0.55)"/><rect x="675" y="591" width="3" height="3" fill="rgba(160,140,20,0.55)"/><rect x="677" y="567" width="3" height="3" fill="rgba(160,140,20,0.55)"/><rect x="680" y="540" width="3" height="3" fill="rgba(160,140,20,0.55)"/><rect x="683" y="509" width="3" height="3" fill="rgba(160,140,20,0.55)"/><rect x="685" y="477" width="3" height="3" fill="rgba(160,140,20,0.55)"/><rect x="688" y="447" width="3" height="3" fill="rgba(160,140,20,0.55)"/><rect x="690" y="423" width="3" height="3" fill="rgba(160,140,20,0.55)"/><rect x="693" y="409" width="3" height="3" fill="rgba(160,140,20,0.55)"/><rect x="696" y="406" width="3" height="3" fill="rgba(160,140,20,0.55)"/><rect x="698" y="415" width="3" height="3" fill="rgba(160,140,20,0.55)"/><rect x="701" y="433" width="3" height="3" fill="rgba(160,140,20,0.55)"/><rect x="703" y="456" width="3" height="3" fill="rgba(160,140,20,0.55)"/><rect x="706" y="481" width="3" height="3" fill="rgba(160,140,20,0.55)"/><rect x="709" y="505" width="3" height="3" fill="rgba(160,140,20,0.55)"/><rect x="711" y="528" width="3" height="3" fill="rgba(160,140,20,0.55)"/><rect x="714" y="548" width="3" height="3" fill="rgba(160,140,20,0.55)"/><rect x="716" y="566" width="3" height="3" fill="rgba(160,140,20,0.55)"/><rect x="719" y="582" width="3" height="3" fill="rgba(160,140,20,0.55)"/><rect x="722" y="595" width="3" height="3" fill="rgba(160,140,20,0.55)"/><rect x="724" y="606" width="3" height="3" fill="rgba(160,140,20,0.55)"/><rect x="727" y="616" width="3" height="3" fill="rgba(160,140,20,0.55)"/><rect x="729" y="625" width="3" height="3" fill="rgba(160,140,20,0.55)"/><rect x="732" y="632" width="3" height="3" fill="rgba(160,140,20,0.55)"/><rect x="735" y="638" width="3" height="3" fill="rgba(160,140,20,0.55)"/><rect x="737" y="643" width="3" height="3" fill="rgba(160,140,20,0.55)"/><rect x="740" y="648" width="3" height="3" fill="rgba(160,140,20,0.55)"/><rect x="742" y="652" width="3" height="3" fill="rgba(160,140,20,0.55)"/><rect x="745" y="655" width="3" height="3" fill="rgba(160,140,20,0.55)"/><rect x="748" y="657" width="3" height="3" fill="rgba(160,140,20,0.55)"/><rect x="750" y="659" width="3" height="3" fill="rgba(160,140,20,0.55)"/><rect x="753" y="661" width="3" height="3" fill="rgba(160,140,20,0.55)"/><rect x="755" y="662" width="3" height="3" fill="rgba(160,140,20,0.55)"/><rect x="758" y="663" width="3" height="3" fill="rgba(160,140,20,0.55)"/><rect x="761" y="663" width="3" height="3" fill="rgba(160,140,20,0.55)"/><rect x="763" y="664" width="3" height="3" fill="rgba(160,140,20,0.55)"/><rect x="766" y="664" width="3" height="3" fill="rgba(160,140,20,0.55)"/><rect x="768" y="664" width="3" height="3" fill="rgba(160,140,20,0.55)"/><rect x="771" y="664" width="3" height="3" fill="rgba(160,140,20,0.55)"/><rect x="774" y="664" width="3" height="3" fill="rgba(160,140,20,0.55)"/><rect x="776" y="663" width="3" height="3" fill="rgba(160,140,20,0.55)"/><rect x="779" y="663" width="3" height="3" fill="rgba(160,140,20,0.55)"/><rect x="781" y="663" width="3" height="3" fill="rgba(160,140,20,0.55)"/><rect x="784" y="663" width="3" height="3" fill="rgba(160,140,20,0.55)"/><rect x="787" y="662" width="3" height="3" fill="rgba(160,140,20,0.55)"/><rect x="789" y="662" width="3" height="3" fill="rgba(160,140,20,0.55)"/><rect x="792" y="662" width="3" height="3" fill="rgba(160,140,20,0.55)"/><rect x="794" y="662" width="3" height="3" fill="rgba(160,140,20,0.55)"/><rect x="797" y="662" width="3" height="3" fill="rgba(160,140,20,0.55)"/><rect x="800" y="662" width="3" height="3" fill="rgba(160,140,20,0.55)"/><rect x="802" y="661" width="3" height="3" fill="rgba(160,140,20,0.55)"/><rect x="805" y="661" width="3" height="3" fill="rgba(160,140,20,0.55)"/><rect x="807" y="660" width="3" height="3" fill="rgba(160,140,20,0.55)"/><rect x="810" y="659" width="3" height="3" fill="rgba(160,140,20,0.55)"/><rect x="813" y="658" width="3" height="3" fill="rgba(160,140,20,0.55)"/><rect x="815" y="657" width="3" height="3" fill="rgba(160,140,20,0.55)"/><rect x="818" y="656" width="3" height="3" fill="rgba(160,140,20,0.55)"/><rect x="820" y="654" width="3" height="3" fill="rgba(160,140,20,0.55)"/><rect x="823" y="652" width="3" height="3" fill="rgba(160,140,20,0.55)"/><rect x="826" y="650" width="3" height="3" fill="rgba(160,140,20,0.55)"/><rect x="828" y="648" width="3" height="3" fill="rgba(160,140,20,0.55)"/><rect x="831" y="646" width="3" height="3" fill="rgba(160,140,20,0.55)"/><rect x="833" y="643" width="3" height="3" fill="rgba(160,140,20,0.55)"/><rect x="836" y="641" width="3" height="3" fill="rgba(160,140,20,0.55)"/><rect x="839" y="638" width="3" height="3" fill="rgba(160,140,20,0.55)"/><rect x="841" y="635" width="3" height="3" fill="rgba(160,140,20,0.55)"/><rect x="844" y="632" width="3" height="3" fill="rgba(160,140,20,0.55)"/><rect x="846" y="630" width="3" height="3" fill="rgba(160,140,20,0.55)"/><rect x="849" y="628" width="3" height="3" fill="rgba(160,140,20,0.55)"/><rect x="852" y="627" width="3" height="3" fill="rgba(160,140,20,0.55)"/><rect x="854" y="626" width="3" height="3" fill="rgba(160,140,20,0.55)"/><rect x="857" y="625" width="3" height="3" fill="rgba(160,140,20,0.55)"/><rect x="859" y="625" width="3" height="3" fill="rgba(160,140,20,0.55)"/><rect x="862" y="625" width="3" height="3" fill="rgba(160,140,20,0.55)"/><rect x="865" y="626" width="3" height="3" fill="rgba(160,140,20,0.55)"/><rect x="867" y="627" width="3" height="3" fill="rgba(160,140,20,0.55)"/><rect x="870" y="628" width="3" height="3" fill="rgba(160,140,20,0.55)"/><rect x="872" y="629" width="3" height="3" fill="rgba(160,140,20,0.55)"/><rect x="875" y="631" width="3" height="3" fill="rgba(160,140,20,0.55)"/><rect x="878" y="632" width="3" height="3" fill="rgba(160,140,20,0.55)"/><rect x="880" y="634" width="3" height="3" fill="rgba(160,140,20,0.55)"/><rect x="883" y="635" width="3" height="3" fill="rgba(160,140,20,0.55)"/><rect x="885" y="638" width="3" height="3" fill="rgba(160,140,20,0.55)"/><rect x="888" y="640" width="3" height="3" fill="rgba(160,140,20,0.55)"/><rect x="891" y="642" width="3" height="3" fill="rgba(160,140,20,0.55)"/><rect x="893" y="644" width="3" height="3" fill="rgba(160,140,20,0.55)"/><rect x="896" y="647" width="3" height="3" fill="rgba(160,140,20,0.55)"/><rect x="898" y="650" width="3" height="3" fill="rgba(160,140,20,0.55)"/><rect x="901" y="652" width="3" height="3" fill="rgba(160,140,20,0.55)"/><rect x="904" y="655" width="3" height="3" fill="rgba(160,140,20,0.55)"/><rect x="906" y="658" width="3" height="3" fill="rgba(160,140,20,0.55)"/><rect x="909" y="661" width="3" height="3" fill="rgba(160,140,20,0.55)"/><rect x="911" y="665" width="3" height="3" fill="rgba(160,140,20,0.55)"/><rect x="914" y="667" width="3" height="3" fill="rgba(160,140,20,0.55)"/><rect x="917" y="669" width="3" height="3" fill="rgba(160,140,20,0.55)"/><rect x="919" y="672" width="3" height="3" fill="rgba(160,140,20,0.55)"/><rect x="922" y="675" width="3" height="3" fill="rgba(160,140,20,0.55)"/><rect x="924" y="678" width="3" height="3" fill="rgba(160,140,20,0.55)"/><rect x="927" y="680" width="3" height="3" fill="rgba(160,140,20,0.55)"/><rect x="826" y="646" width="7" height="1" fill="#ff0000"/><rect x="827" y="647" width="1" height="1" fill="#ff0000"/><rect x="831" y="647" width="1" height="1" fill="#ff0000"/><rect x="827" y="648" width="1" height="1" fill="#ff0000"/><rect x="831" y="648" width="1" height="1" fill="#ff0000"/><rect x="828" y="649" width="1" height="1" fill="#ff0000"/><rect x="830" y="649" width="1" height="1" fill="#ff0000"/><rect x="828" y="650" width="1" height="1" fill="#ff0000"/><rect x="830" y="650" width="1" height="1" fill="#ff0000"/><rect x="829" y="651" width="1" height="1" fill="#ff0000"/><rect x="829" y="652" width="1" height="1" fill="#ff0000"/><rect x="826" y="571" width="7" height="1" fill="#ff0000"/><rect x="827" y="572" width="1" height="1" fill="#ff0000"/><rect x="831" y="572" width="1" height="1" fill="#ff0000"/><rect x="827" y="573" width="1" height="1" fill="#ff0000"/><rect x="831" y="573" width="1" height="1" fill="#ff0000"/><rect x="828" y="574" width="1" height="1" fill="#ff0000"/><rect x="830" y="574" width="1" height="1" fill="#ff0000"/><rect x="828" y="575" width="1" height="1" fill="#ff0000"/><rect x="830" y="575" width="1" height="1" fill="#ff0000"/><rect x="829" y="576" width="1" height="1" fill="#ff0000"/><rect x="829" y="577" width="1" height="1" fill="#ff0000"/><rect x="740" y="650" width="7" height="1" fill="#00ff00"/><rect x="741" y="651" width="1" height="1" fill="#00ff00"/><rect x="745" y="651" width="1" height="1" fill="#00ff00"/><rect x="741" y="652" width="1" height="1" fill="#00ff00"/><rect x="745" y="652" width="1" height="1" fill="#00ff00"/><rect x="742" y="653" width="1" height="1" fill="#00ff00"/><rect x="744" y="653" width="1" height="1" fill="#00ff00"/><rect x="742" y="654" width="1" height="1" fill="#00ff00"/><rect x="744" y="654" width="1" height="1" fill="#00ff00"/><rect x="743" y="655" width="1" height="1" fill="#00ff00"/><rect x="743" y="656" width="1" height="1" fill="#00ff00"/><rect x="740" y="636" width="7" height="1" fill="#00ff00"/><rect x="741" y="637" width="1" height="1" fill="#00ff00"/><rect x="745" y="637" width="1" height="1" fill="#00ff00"/><rect x="741" y="638" width="1" height="1" fill="#00ff00"/><rect x="745" y="638" width="1" height="1" fill="#00ff00"/><rect x="742" y="639" width="1" height="1" fill="#00ff00"/><rect x="744" y="639" width="1" height="1" fill="#00ff00"/><rect x="742" y="640" width="1" height="1" fill="#00ff00"/><rect x="744" y="640" width="1" height="1" fill="#00ff00"/><rect x="743" y="641" width="1" height="1" fill="#00ff00"/><rect x="743" y="642" width="1" height="1" fill="#00ff00"/><rect x="922" y="676" width="7" height="1" fill="#0000ff"/><rect x="923" y="677" width="1" height="1" fill="#0000ff"/><rect x="927" y="677" width="1" height="1" fill="#0000ff"/><rect x="923" y="678" width="1" height="1" fill="#0000ff"/><rect x="927" y="678" width="1" height="1" fill="#0000ff"/><rect x="924" y="679" width="1" height="1" fill="#0000ff"/><rect x="926" y="679" width="1" height="1" fill="#0000ff"/><rect x="924" y="680" width="1" height="1" fill="#0000ff"/><rect x="926" y="680" width="1" height="1" fill="#0000ff"/><rect x="925" y="681" width="1" height="1" fill="#0000ff"/><rect x="925" y="682" width="1" height="1" fill="#0000ff"/><rect x="922" y="615" width="7" height="1" fill="#0000ff"/><rect x="923" y="616" width="1" height="1" fill="#0000ff"/><rect x="927" y="616" width="1" height="1" fill="#0000ff"/><rect x="923" y="617" width="1" height="1" fill="#0000ff"/><rect x="927" y="617" width="1" height="1" fill="#0000ff"/><rect x="924" y="618" width="1" height="1" fill="#0000ff"/><rect x="926" y="618" width="1" height="1" fill="#0000ff"/><rect x="924" y="619" width="1" height="1" fill="#0000ff"/><rect x="926" y="619" width="1" height="1" fill="#0000ff"/><rect x="925" y="620" width="1" height="1" fill="#0000ff"/><rect x="925" y="621" width="1" height="1" fill="#0000ff"/><rect x="642" y="385" width="7" height="2" fill="rgba(160,140,20,0.9)"/><rect x="927" y="385" width="7" height="2" fill="rgba(20,160,140,0.9)"/></svg>
<div class="t" style="top:49px;left:625px;">S11 Smith Chart</div>
<div class="t" style="top:49px;left:981px;">S11 VSWR</div>
<div class="t" style="top:69px;left:982px;">3.0</div>
<div class="t" style="top:136px;left:982px;">2.5</div>
<div class="t" style="top:205px;left:982px;">2.0</div>
<div class="t" style="top:275px;left:982px;">1.5</div>
<div class="t" style="top:344px;left:982px;">1.0</div>
<div class="t" style="top:356px;left:989px;">140.0M</div>
<div class="t" style="top:689px;left:989px;">140.0M</div>
<div class="t" style="top:356px;left:1139px;">160.0M</div>
<div class="t" style="top:689px;left:1139px;">160.0M</div>
<div class="t" style="top:356px;left:1289px;">180.0M</div>
<div class="t" style="top:689px;left:1289px;">180.0M</div>
<div class="t" style="top:382px;left:981px;">S11 Return Loss (dB)</div>
<div class="t" style="top:401px;left:982px;">0</div>
<div class="t" style="top:447px;left:982px;">-5</div>
<div class="t" style="top:493px;left:982px;">-10</div>
<div class="t" style="top:539px;left:982px;">-15</div>
<div class="t" style="top:586px;left:982px;">-20</div>
<div class="t" style="top:632px;left:982px;">-25</div>
<div class="t" style="top:674px;left:982px;">-30</div>
<div class="t" style="top:382px;left:632px;">R</div>
<div class="t" style="top:382px;left:672px;">S11 R+jX (Ω)</div>
<div class="t" style="top:382px;left:937px;">X</div>
<div class="t" style="top:401px;left:626px;">177.0</div>
<div class="t" style="top:401px;left:937px;">100.0</div>
<div class="t" style="top:456px;left:626px;">147.8</div>
<div class="t" style="top:456px;left:937px;">68.0</div>
<div class="t" style="top:512px;left:626px;">118.6</div>
<div class="t" style="top:512px;left:937px;">36.0</div>
<div class="t" style="top:567px;left:626px;">89.4</div>
<div class="t" style="top:567px;left:937px;">4.0</div>
<div class="t" style="top:623px;left:626px;">60.2</div>
<div class="t" style="top:623px;left:937px;">-28.0</div>
<div class="t" style="top:674px;left:626px;">31</div>
<div class="t" style="top:674px;left:937px;">-60</div>
<div class="t" style="top:689px;left:648px;">140.0M</div>
<div class="t" style="top:689px;left:778px;">160.0M</div>
<div class="t" style="top:689px;left:908px;">180.0M</div>
<div style="position:absolute;left:1337px;top:35px;width:1px;height:673px;background:#fbfbfb;"></div>
<div style="position:absolute;left:1345px;top:52px;width:2px;height:634px;background:#8a8a8a;border-radius:1px;"></div></body></html>
